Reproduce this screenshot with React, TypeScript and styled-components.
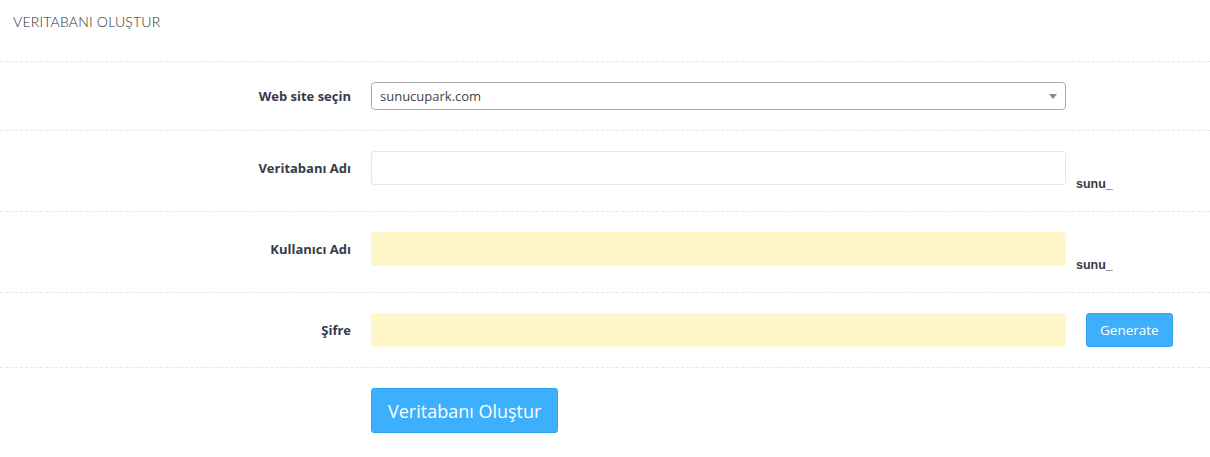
import { FC, ReactNode } from 'react';
import styled, { createGlobalStyle } from 'styled-components';

const GlobalStyle = createGlobalStyle`
  body {
    margin: 0;
    background: #ffffff;
    font-family: 'Open Sans', 'Liberation Sans', sans-serif;
  }
`;

const Panel = styled.div`
  width: 1210px;
  background: #ffffff;
`;

const Heading = styled.h4`
  margin: 0;
  padding: 13px 13px 17px;
  height: 31px;
  font-family: Lato, 'Open Sans', sans-serif;
  font-weight: 300;
  font-size: 14px;
  line-height: 18px;
  color: #2e2e2e;
  letter-spacing: 0.2px;
  border-bottom: 1px dashed #e6e6e6;
`;

const Row = styled.div`
  display: flex;
  align-items: flex-start;
  padding: 20px 0;
  border-bottom: 1px dashed #e6e6e6;

  &:last-child {
    border-bottom: none;
  }
`;

const Label = styled.label<{ $height: number }>`
  width: 351px;
  height: ${({ $height }) => $height}px;
  display: flex;
  align-items: center;
  justify-content: flex-end;
  flex-shrink: 0;
  margin-right: 20px;
  font-size: 13px;
  font-weight: 700;
  color: #363b4a;
`;

const Field = styled.div`
  width: 695px;
  flex-shrink: 0;
`;

const Select = styled.div`
  height: 28px;
  box-sizing: border-box;
  border: 1px solid #aaaaaa;
  border-radius: 4px;
  padding: 0 8px;
  display: flex;
  align-items: center;
  font-size: 13px;
  color: #444444;
  position: relative;
`;

const Arrow = styled.span`
  position: absolute;
  right: 8px;
  top: 50%;
  margin-top: -2px;
  width: 0;
  height: 0;
  border-left: 4px solid transparent;
  border-right: 4px solid transparent;
  border-top: 5px solid #888888;
`;

const TextInput = styled.input<{ $filled?: boolean }>`
  display: block;
  width: 100%;
  height: 34px;
  box-sizing: border-box;
  border: 1px solid ${({ $filled }) => ($filled ? '#fff6ca' : '#dfe6ec')};
  border-radius: 3px;
  background: ${({ $filled }) => ($filled ? '#fff6ca' : '#ffffff')};
  padding: 6px 12px;
  font-family: inherit;
  font-size: 13px;
  outline: none;
`;

const Suffix = styled.span`
  margin-top: 27px;
  margin-left: 10px;
  font-family: 'Liberation Sans', Arial, sans-serif;
  font-size: 12.5px;
  font-weight: 700;
  line-height: 13px;
  color: #363b4a;
`;

const Button = styled.button<{ $large?: boolean }>`
  box-sizing: border-box;
  height: ${({ $large }) => ($large ? 45 : 34)}px;
  padding: ${({ $large }) => ($large ? '0 16px' : '0 13px')};
  margin-left: ${({ $large }) => ($large ? 371 : 20)}px;
  background: #3cb0fd;
  border: 1px solid #2ea3f2;
  border-radius: 3px;
  color: #ffffff;
  font-family: 'Open Sans', sans-serif;
  font-size: ${({ $large }) => ($large ? 18 : 13.5)}px;
  cursor: pointer;
`;

interface FormRowProps {
  label: string;
  height: number;
  children: ReactNode;
}

const FormRow: FC<FormRowProps> = ({ label, height, children }) => (
  <Row>
    <Label $height={height}>{label}</Label>
    {children}
  </Row>
);

const App: FC = () => {
  return (
    <>
      <GlobalStyle />
      <Panel>
        <Heading>VERITABANI OLUŞTUR</Heading>
        <FormRow label="Web site seçin" height={28}>
          <Field>
            <Select>
              sunucupark.com
              <Arrow />
            </Select>
          </Field>
        </FormRow>
        <FormRow label="Veritabanı Adı" height={34}>
          <Field>
            <TextInput type="text" />
          </Field>
          <Suffix>sunu_</Suffix>
        </FormRow>
        <FormRow label="Kullanıcı Adı" height={34}>
          <Field>
            <TextInput type="text" $filled />
          </Field>
          <Suffix>sunu_</Suffix>
        </FormRow>
        <FormRow label="Şifre" height={34}>
          <Field>
            <TextInput type="password" $filled />
          </Field>
          <Button>Generate</Button>
        </FormRow>
        <Row>
          <Button $large>Veritabanı Oluştur</Button>
        </Row>
      </Panel>
    </>
  );
};

export default App;
